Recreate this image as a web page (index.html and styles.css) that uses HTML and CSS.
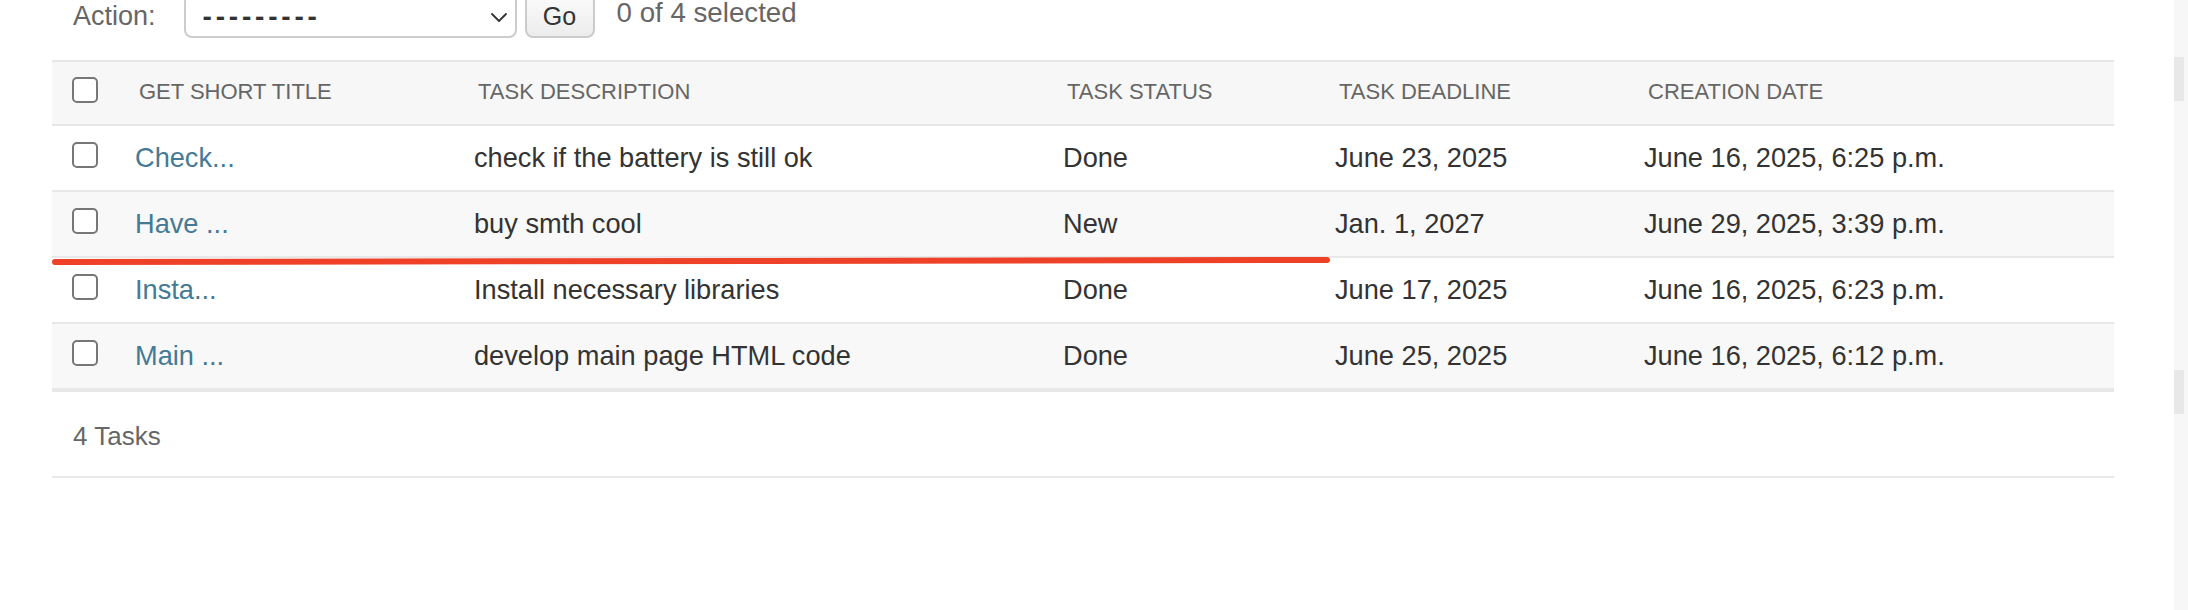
FILE: index.html
```html
<!DOCTYPE html>
<html lang="en">
<head>
<meta charset="utf-8">
<title>Tasks</title>
<link rel="stylesheet" href="styles.css">
</head>
<body>
<div class="page">
  <div class="main">
    <div class="actions">
      <label class="action-label">Action:</label>
      <div class="select">
        <span class="select-text">---------</span>
        <svg class="chevron" width="16" height="9" viewBox="0 0 16 9"><path d="M1 1 L8 8 L15 1" fill="none" stroke="#333" stroke-width="1.8" stroke-linecap="round" stroke-linejoin="round"/></svg>
      </div>
      <button class="go">Go</button>
      <span class="counter">0 of 4 selected</span>
    </div>

    <div class="results">
      <table class="result-list">
        <colgroup>
          <col class="c-check">
          <col class="c-title">
          <col class="c-desc">
          <col class="c-status">
          <col class="c-deadline">
          <col class="c-created">
        </colgroup>
        <thead>
          <tr>
            <th class="check-cell"><span class="box"></span></th>
            <th>GET SHORT TITLE</th>
            <th>TASK DESCRIPTION</th>
            <th>TASK STATUS</th>
            <th>TASK DEADLINE</th>
            <th>CREATION DATE</th>
          </tr>
        </thead>
        <tbody>
          <tr>
            <td class="check-cell"><span class="box"></span></td>
            <td><a class="link" href="#">Check...</a></td>
            <td>check if the battery is still ok</td>
            <td>Done</td>
            <td>June 23, 2025</td>
            <td>June 16, 2025, 6:25 p.m.</td>
          </tr>
          <tr class="alt">
            <td class="check-cell"><span class="box"></span></td>
            <td><a class="link" href="#">Have ...</a></td>
            <td>buy smth cool</td>
            <td>New</td>
            <td>Jan. 1, 2027</td>
            <td>June 29, 2025, 3:39 p.m.</td>
          </tr>
          <tr>
            <td class="check-cell"><span class="box"></span></td>
            <td><a class="link" href="#">Insta...</a></td>
            <td>Install necessary libraries</td>
            <td>Done</td>
            <td>June 17, 2025</td>
            <td>June 16, 2025, 6:23 p.m.</td>
          </tr>
          <tr class="alt last">
            <td class="check-cell"><span class="box"></span></td>
            <td><a class="link" href="#">Main ...</a></td>
            <td>develop main page HTML code</td>
            <td>Done</td>
            <td>June 25, 2025</td>
            <td>June 16, 2025, 6:12 p.m.</td>
          </tr>
        </tbody>
      </table>
      <svg class="annotation" width="1290" height="12" viewBox="0 0 1290 12">
        <line x1="6" y1="7" x2="1278" y2="5" stroke="#ee4128" stroke-width="6" stroke-linecap="round"/>
      </svg>
    </div>

    <p class="paginator">4 Tasks</p>
  </div>
  <div class="scrollbar">
    <div class="thumb thumb-top"></div>
    <div class="thumb thumb-bottom"></div>
  </div>
</div>
</body>
</html>
```

FILE: styles.css
```css
html, body {
  margin: 0;
  padding: 0;
  background: #ffffff;
}

body {
  font-family: "Liberation Sans", Arial, sans-serif;
  color: #333333;
  overflow: hidden;
}

.page {
  display: flex;
  width: 2188px;
  height: 610px;
  overflow: hidden;
}

.main {
  flex: 0 0 2062px;
  margin-left: 52px;
}

/* ---------- actions bar ---------- */
.actions {
  display: flex;
  align-items: center;
  height: 44px;
  margin-top: -6px;
  padding-left: 21px;
}

.action-label {
  font-size: 27px;
  color: #666666;
  margin-right: 28px;
}

.select {
  box-sizing: border-box;
  width: 333px;
  height: 44px;
  border: 2px solid #cccccc;
  border-radius: 8px;
  background: #ffffff;
  display: flex;
  align-items: center;
  justify-content: space-between;
  padding: 0 8px 0 17px;
}

.select-text {
  font-size: 28px;
  letter-spacing: 3.8px;
  font-weight: bold;
  color: #333333;
  padding-top: 2px;
}

.chevron {
  flex: 0 0 16px;
  margin-top: 2px;
}

.go {
  box-sizing: border-box;
  width: 70px;
  height: 44px;
  margin-left: 8px;
  border: 2px solid #cccccc;
  border-radius: 8px;
  background: linear-gradient(#fbfbfb, #ececec);
  font-family: "Liberation Sans", Arial, sans-serif;
  font-size: 25px;
  color: #333333;
  padding: 0;
}

.counter {
  font-size: 27.7px;
  color: #666666;
  margin-left: 22px;
  margin-bottom: 6px;
}

/* ---------- results table ---------- */
.results {
  position: relative;
  margin-top: 22px;
}

.result-list {
  width: 2062px;
  table-layout: fixed;
  border-collapse: separate;
  border-spacing: 0;
}

.c-check { width: 67px; }
.c-title { width: 339px; }
.c-desc { width: 589px; }
.c-status { width: 272px; }
.c-deadline { width: 309px; }
.c-created { width: 486px; }

.result-list th {
  background: #f7f7f7;
  border-top: 2px solid #e8e8e8;
  border-bottom: 2px solid #e8e8e8;
  text-align: left;
  font-weight: normal;
  font-size: 22px;
  line-height: 24px;
  color: #666666;
  padding: 18px 0 20px 20px;
  white-space: nowrap;
}

.result-list td {
  border-bottom: 2px solid #e8e8e8;
  font-size: 27.2px;
  line-height: 32px;
  color: #333333;
  padding: 16px 0 16px 16px;
  white-space: nowrap;
  vertical-align: top;
}

.result-list tr.alt td {
  background: #f8f8f8;
}

.result-list tr.last td {
  border-bottom-width: 4px;
}

.result-list th.check-cell {
  padding: 15px 0 21px 20px;
  vertical-align: top;
}

.result-list td.check-cell {
  padding: 16px 0 22px 20px;
}

.box {
  display: block;
  box-sizing: border-box;
  width: 26px;
  height: 26px;
  border: 2px solid #777777;
  border-radius: 5px;
  background: #ffffff;
}

.link {
  color: #447a96;
  text-decoration: none;
}

.annotation {
  position: absolute;
  left: -3px;
  top: 195px;
}

/* ---------- paginator ---------- */
.paginator {
  margin: 0;
  padding: 28px 0 24px 21px;
  font-size: 26px;
  line-height: 32px;
  color: #666666;
  border-bottom: 2px solid #e8e8e8;
}

/* ---------- scrollbar strip ---------- */
.scrollbar {
  margin-left: auto;
  flex: 0 0 14px;
  height: 610px;
  background: #f7f7f7;
  display: flex;
  flex-direction: column;
}

.thumb {
  width: 10px;
  height: 44px;
  background: #e8e8e8;
}

.thumb-top {
  margin-top: 57px;
}

.thumb-bottom {
  margin-top: 269px;
}
```
